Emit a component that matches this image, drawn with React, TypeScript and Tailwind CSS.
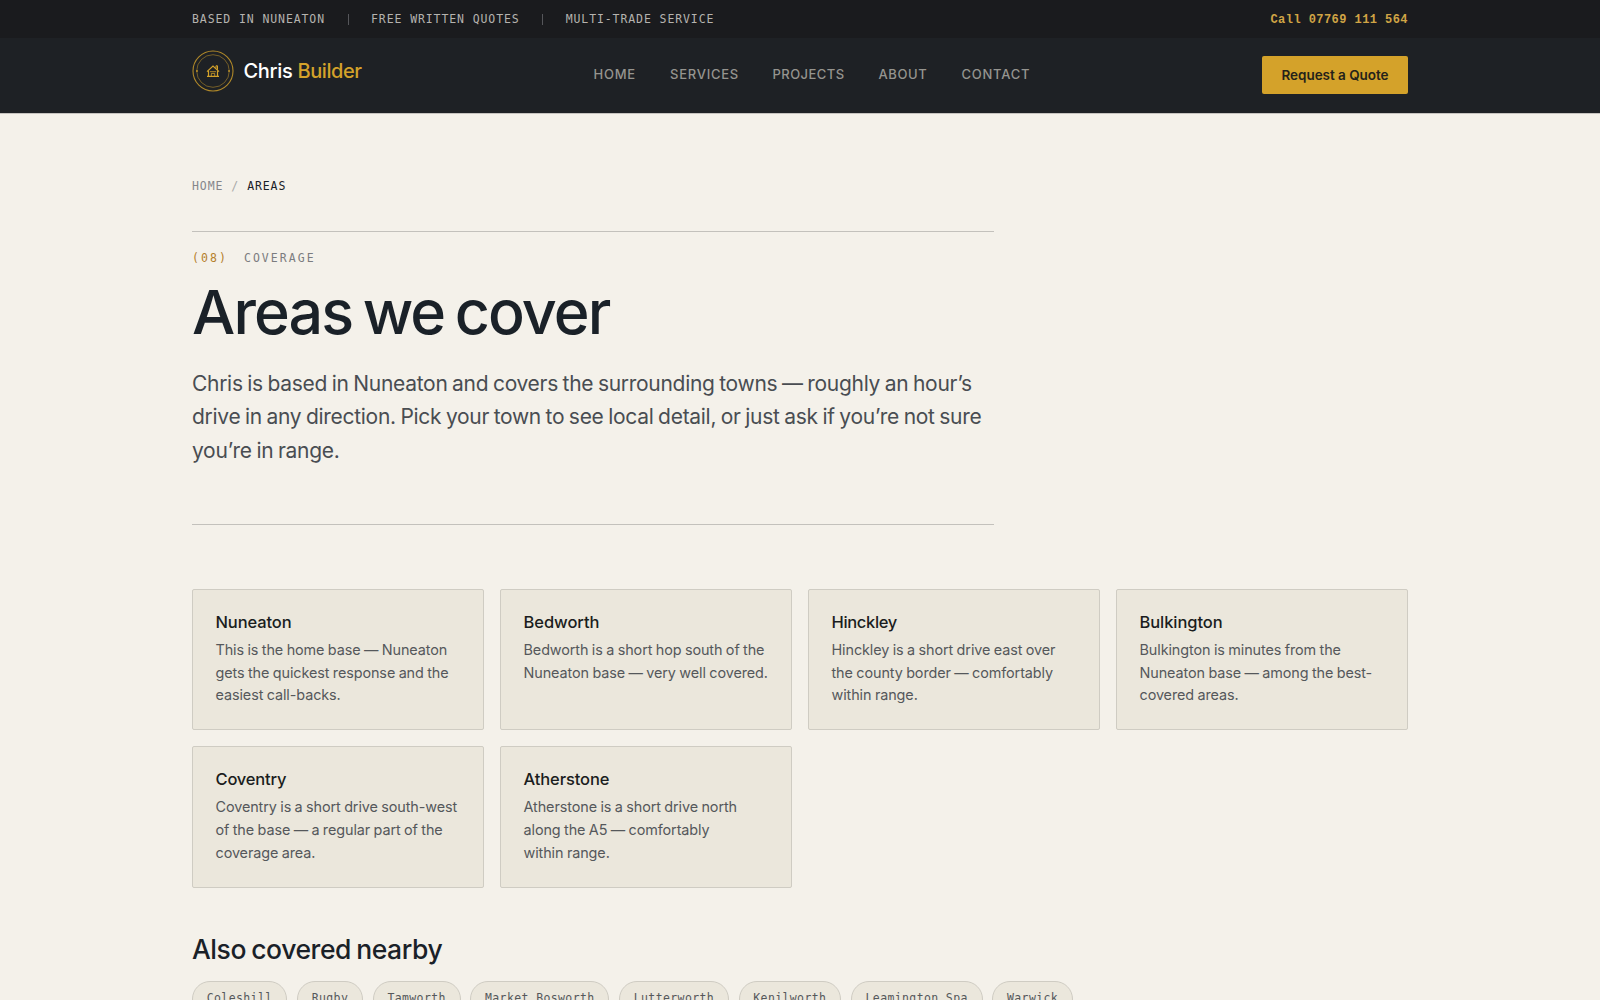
import { clsx } from 'clsx';

interface Area {
  name: string;
  lines: string[];
  cls: string;
}

const TOP_ITEMS = ['Based in Nuneaton', 'Free written quotes', 'Multi-trade service'];

const NAV = [
  { label: 'Home',     cls: 'w-[76.5px]' },
  { label: 'Services', cls: 'w-[102.5px]' },
  { label: 'Projects', cls: 'w-[106px] tracking-[0.45px]' },
  { label: 'About',    cls: 'w-[83px] tracking-[0.6px]' },
  { label: 'Contact',  cls: 'w-[70px]' },
];

const AREAS: Area[] = [
  { name: 'Nuneaton',   cls: 'tracking-[-0.12px]',  lines: ['This is the home base — Nuneaton', 'gets the quickest response and the', 'easiest call-backs.'] },
  { name: 'Bedworth',   cls: 'tracking-[-0.05px]',  lines: ['Bedworth is a short hop south of the', 'Nuneaton base — very well covered.'] },
  { name: 'Hinckley',   cls: 'tracking-[-0.34px]',  lines: ['Hinckley is a short drive east over', 'the county border — comfortably', 'within range.'] },
  { name: 'Bulkington', cls: 'tracking-[-0.08px]',  lines: ['Bulkington is minutes from the', 'Nuneaton base — among the best-', 'covered areas.'] },
  { name: 'Coventry',   cls: 'tracking-[-0.2px]',   lines: ['Coventry is a short drive south-west', 'of the base — a regular part of the', 'coverage area.'] },
  { name: 'Atherstone', cls: 'tracking-[-0.1px]',   lines: ['Atherstone is a short drive north', 'along the A5 — comfortably', 'within range.'] },
];

const NEARBY = [
  'Coleshill',
  'Rugby',
  'Tamworth',
  'Market Bosworth',
  'Lutterworth',
  'Kenilworth',
  'Leamington Spa',
  'Warwick',
];

function LogoMark() {
  return (
    <svg width="42" height="42" viewBox="0 0 42 42" fill="none" stroke="#d4a22a" className="shrink-0">
      <circle cx="21" cy="21" r="20" strokeWidth="1.1" strokeOpacity="0.8" />
      <circle cx="21" cy="21" r="16.3" strokeWidth="0.8" strokeOpacity="0.6" />
      <circle cx="5" cy="21" r="1" fill="#d4a22a" stroke="none" opacity="0.8" />
      <circle cx="37" cy="21" r="1" fill="#d4a22a" stroke="none" opacity="0.8" />
      {/* House */}
      <path d="M15 21.6 21 16l6 5.6" strokeWidth="1.2" />
      <path d="M24 18.4v-2.6h1.5v4" strokeWidth="1" />
      <path d="M16.5 20.8v5.4M25.5 20.8v5.4M15 26.4h12" strokeWidth="1.2" />
      <path d="M18 21.7h6M19.3 26v-2.6h3.4V26" strokeWidth="0.8" />
    </svg>
  );
}

export default function App() {
  return (
    <div className="h-[1000px] overflow-hidden bg-[#f4f1ea] font-['Inter',sans-serif] text-[#1a2128]">
      {/* Top bar */}
      <div className="h-[38px] bg-[#1a1b1e]">
        <div className="mx-auto flex h-full w-[1216px] items-center justify-between pt-px font-['DejaVu_Sans_Mono',monospace]">
          <div className="flex items-center gap-[22.5px] text-[11.5px] tracking-[0.9px] text-[#b5b3af] uppercase">
            {TOP_ITEMS.map((item, i) => (
              <div key={item} className="flex items-center gap-[22.5px]">
                {i > 0 && <span className="h-[11px] w-px bg-[#55565a]" />}
                <span>{item}</span>
              </div>
            ))}
          </div>
          <a className="font-['Liberation_Mono',monospace] text-[12px] font-bold tracking-[0.44px] text-[#d0a445]">
            Call 07769 111 564
          </a>
        </div>
      </div>

      {/* Header */}
      <header className="h-[76px] border-b border-[#c6c3bf] bg-[#1e2125] pb-[2px]">
        <div className="mx-auto flex h-full w-[1216px] items-center">
          <a className="flex w-[401.5px] items-center gap-[9.5px] pb-2">
            <LogoMark />
            <span className="text-[20px] leading-6 font-medium tracking-[-0.3px] whitespace-nowrap text-white">
              Chris <span className="tracking-[-0.42px] text-[#d4a22a]">Builder</span>
            </span>
          </a>
          <nav className="flex pt-px text-[13px] font-medium tracking-[0.75px] text-[#95948f] uppercase">
            {NAV.map(item => (
              <a key={item.label} className={item.cls}>{item.label}</a>
            ))}
          </nav>
          <a className="ml-auto flex h-[38px] w-[146px] items-center justify-center rounded-[2px] bg-[#d4a22a] pt-px text-[13.5px] font-semibold tracking-[-0.04px] text-[#25221a]">
            Request a Quote
          </a>
        </div>
      </header>

      <main className="mx-auto w-[1216px] pt-[65px]">
        {/* Breadcrumb */}
        <div className="flex h-4 items-center gap-2 font-['DejaVu_Sans_Mono',monospace] text-[11.5px] tracking-[0.9px] text-[#85868a] uppercase">
          <a>Home</a>
          <span className="text-[#a9a9a8]">/</span>
          <span className="text-[#1a2128]">Areas</span>
        </div>

        {/* Intro */}
        <section className="mt-9 h-[294px] w-[802px] border-y border-[#c3c1bc] pt-[19px]">
          <div className="flex h-4 items-center gap-4 font-['DejaVu_Sans_Mono',monospace] text-[11.5px] tracking-[2.05px] text-[#7b7c7f] uppercase">
            <span className="text-[#b5802a]">(08)</span>
            <span>Coverage</span>
          </div>
          <h1 className="mt-[13px] text-[61px] leading-[64px] font-[450] tracking-[-1.87px] [word-spacing:-4px]">Areas we cover</h1>
          <p className="mt-[22.5px] text-[21px] leading-[33.6px] tracking-[-0.29px] whitespace-nowrap text-[#494d52] [word-spacing:-1px]">
            Chris is based in Nuneaton and covers the surrounding towns — roughly an hour’s<br />
            drive in any direction. Pick your town to see local detail, or just ask if you’re not sure<br />
            you’re in range.
          </p>
        </section>

        {/* Area cards */}
        <section className="mt-16 grid grid-cols-4 gap-4">
          {AREAS.map(area => (
            <a key={area.name} className="h-[141.4px] rounded-[2px] border border-[#cfccc3] bg-[#ebe7dc] px-[22.5px] pt-[21px]">
              <h3 className={clsx('text-[16.5px] leading-[22px] font-medium text-[#1a1d20]', area.cls)}>{area.name}</h3>
              <p className="mt-[5.8px] text-[14.4px] leading-[22.8px] tracking-[-0.09px] whitespace-nowrap text-[#55585b] [word-spacing:-0.5px]">
                {area.lines.map(line => (
                  <span key={line} className="block">{line}</span>
                ))}
              </p>
            </a>
          ))}
        </section>

        {/* Nearby towns */}
        <h2 className="mt-[45.2px] text-[26.5px] leading-8 font-[450] tracking-[-0.42px] [word-spacing:-1.5px]">Also covered nearby</h2>
        <div className="mt-4 flex gap-[9.7px] font-['DejaVu_Sans_Mono',monospace] text-[11.5px] tracking-[0.38px] text-[#55585b]">
          {NEARBY.map(town => (
            <span key={town} className="flex h-9 items-center rounded-full border border-[#cfccc3] bg-[#ebe7dc] px-[13.75px] whitespace-nowrap">
              {town}
            </span>
          ))}
        </div>
      </main>
    </div>
  );
}
